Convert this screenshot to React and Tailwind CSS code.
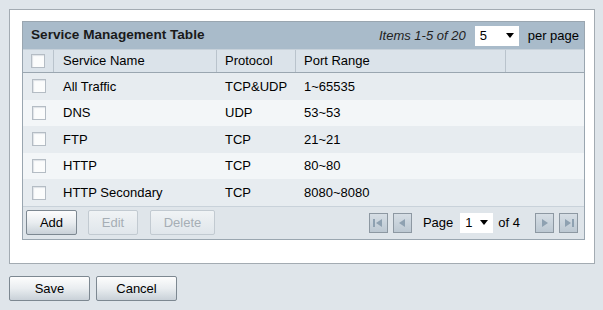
import React from "react";

const rows = [
  { name: "All Traffic", protocol: "TCP&UDP", range: "1~65535" },
  { name: "DNS", protocol: "UDP", range: "53~53" },
  { name: "FTP", protocol: "TCP", range: "21~21" },
  { name: "HTTP", protocol: "TCP", range: "80~80" },
  { name: "HTTP Secondary", protocol: "TCP", range: "8080~8080" },
];

const cols = "grid grid-cols-[31px_163px_79px_210px_1fr]";

const Checkbox = () => (
  <div className="w-[14px] h-[14px] border border-[#b4bcc4] bg-[#fbfcfc] shadow-[inset_1px_1px_1px_#dde2e6]" />
);

const Button = ({ children, disabled, className = "" }) => (
  <button
    className={`h-[25px] rounded-[2px] border text-[13px] ${
      disabled
        ? "border-[#c2cad1] text-[#a6aeb5] bg-gradient-to-b from-[#f0f3f5] to-[#e0e6eb]"
        : "border-[#7d8891] text-black bg-gradient-to-b from-[#fdfdfd] via-[#e9edf0] to-[#c9d1d8]"
    } ${className}`}
  >
    {children}
  </button>
);

const NavBtn = ({ dir, end }) => (
  <div className="w-[19px] h-[20px] border border-[#8d98a2] bg-gradient-to-b from-[#d6dee5] to-[#bcc8d2] flex items-center justify-center">
    <svg width="12" height="10" viewBox="0 0 12 10">
      {dir === "left" ? (
        <>
          {end && <rect x="1" y="1" width="2" height="8" fill="#8ea1b1" />}
          <polygon points={end ? "4,5 10,1 10,9" : "3,5 9,1 9,9"} fill="#8ea1b1" />
        </>
      ) : (
        <>
          <polygon points={end ? "2,1 8,5 2,9" : "3,1 9,5 3,9"} fill="#8ea1b1" />
          {end && <rect x="9" y="1" width="2" height="8" fill="#8ea1b1" />}
        </>
      )}
    </svg>
  </div>
);

const Select = ({ value, className = "" }) => (
  <div className={`h-[20px] bg-white flex items-center justify-between pl-[5px] pr-[5px] ${className}`}>
    <span className="text-[13px] text-black">{value}</span>
    <svg width="8" height="5" viewBox="0 0 8 5">
      <polygon points="0,0 8,0 4,5" fill="#000" />
    </svg>
  </div>
);

export default function App() {
  return (
    <div className="w-[603px] h-[310px] bg-[#dfe5ea] pt-[9px] pl-[9px] font-['Liberation_Sans',Arial,sans-serif] text-[13px] text-black">
      <div className="w-[586px] h-[255px] bg-white border border-[#a3abb2] pt-[11px] pl-[12px]">
        <div className="w-[563px] border border-[#9aa6b0]">
          {/* title bar */}
          <div className="h-[27px] bg-[#a9bbca] flex items-center pl-[8px] pr-[5px]">
            <span className="font-bold text-[13.6px] text-[#1a1a1a]">Service Management Table</span>
            <div className="ml-auto flex items-center">
              <span className="italic text-[#222]">Items 1-5 of 20</span>
              <Select value="5" className="w-[44px] ml-[9px]" />
              <span className="ml-[9px]">per page</span>
            </div>
          </div>
          {/* column header */}
          <div className={`${cols} h-[24px] bg-[#dbe3ea] border-t border-[#c7d1da] border-b border-b-[#9aa6b0]`}>
            <div className="flex items-center pl-[8px] border-r border-[#b9c3cc]">
              <Checkbox />
            </div>
            <div className="flex items-center pl-[9px] border-r border-[#b9c3cc]">Service Name</div>
            <div className="flex items-center pl-[8px] border-r border-[#b9c3cc]">Protocol</div>
            <div className="flex items-center pl-[8px] border-r border-[#b9c3cc]">Port Range</div>
            <div />
          </div>
          {/* rows */}
          {rows.map((r, i) => (
            <div
              key={r.name}
              className={`${cols} h-[26.6px] ${i % 2 === 0 ? "bg-[#e7ecf0]" : "bg-[#f3f6f8]"}`}
            >
              <div className="flex items-center pl-[9px]">
                <Checkbox />
              </div>
              <div className="flex items-center pl-[9px]">{r.name}</div>
              <div className="flex items-center pl-[8px]">{r.protocol}</div>
              <div className="flex items-center pl-[8px]">{r.range}</div>
              <div />
            </div>
          ))}
          {/* footer */}
          <div className="h-[33px] bg-[#dfe5ea] border-t border-[#c9d2da] flex items-center pl-[3px] pr-[6px]">
            <Button className="w-[51px]">Add</Button>
            <Button disabled className="w-[50px] ml-[11px]">Edit</Button>
            <Button disabled className="w-[65px] ml-[12px]">Delete</Button>
            <div className="ml-auto flex items-center">
              <NavBtn dir="left" end />
              <div className="ml-[5px]"><NavBtn dir="left" /></div>
              <span className="ml-[11px]">Page</span>
              <Select value="1" className="w-[33px] ml-[7px]" />
              <span className="ml-[5px]">of 4</span>
              <div className="ml-[15px]"><NavBtn dir="right" /></div>
              <div className="ml-[5px]"><NavBtn dir="right" end /></div>
            </div>
          </div>
        </div>
      </div>
      <div className="flex mt-[12px] gap-[6px]">
        <Button className="w-[81px]">Save</Button>
        <Button className="w-[81px]">Cancel</Button>
      </div>
    </div>
  );
}
